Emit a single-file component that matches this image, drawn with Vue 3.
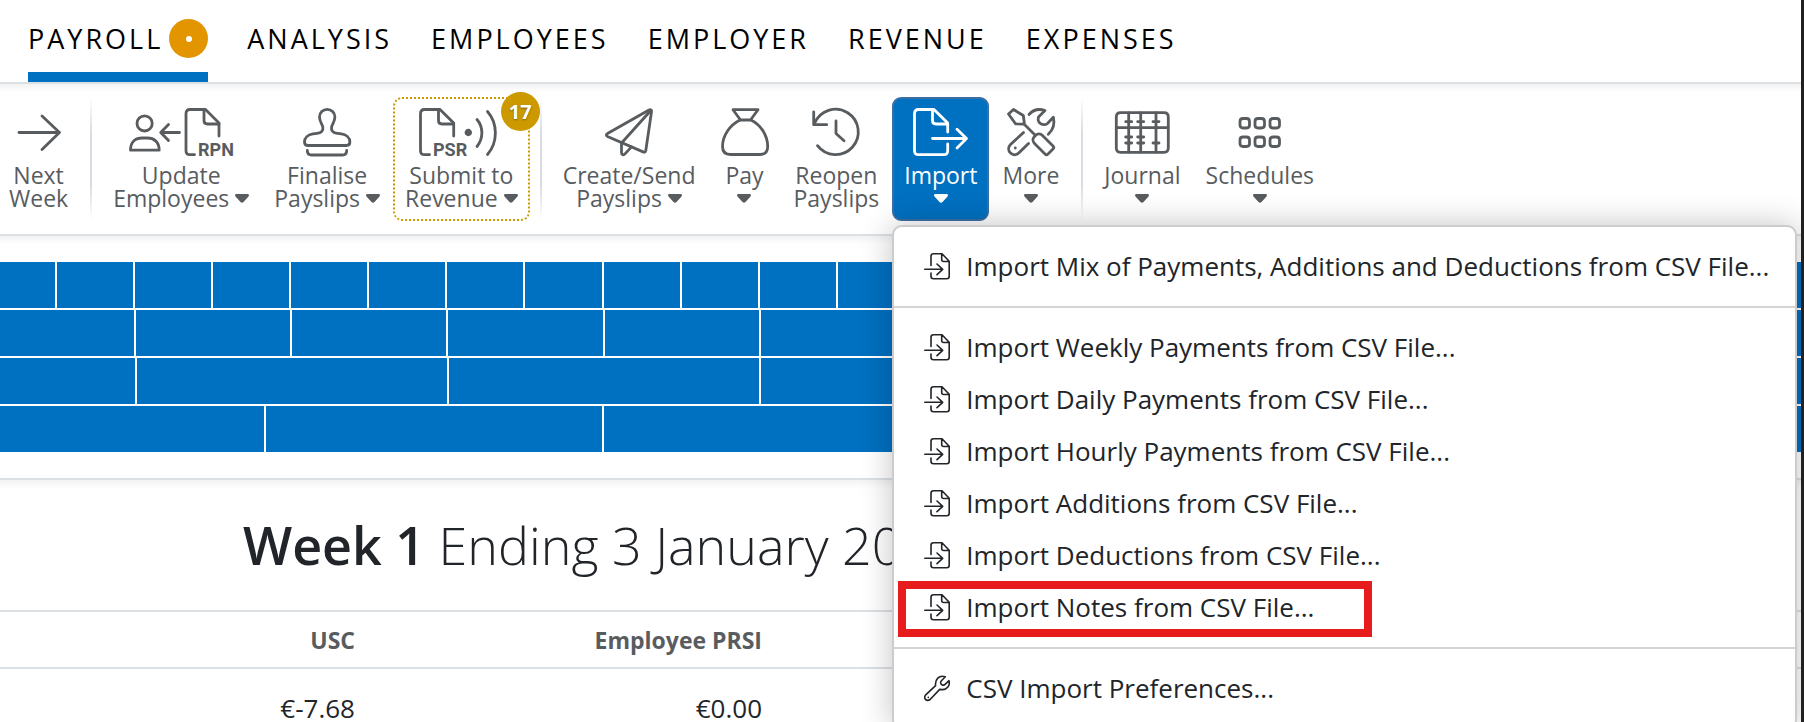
<template>
  <div class="app">
    <nav class="main-nav">
      <a
        v-for="tab in tabs"
        :key="tab"
        href="#"
        class="nav-link"
        :class="{ active: tab === activeTab }"
        @click.prevent="activeTab = tab"
      >
        {{ tab }}
        <span v-if="tab === 'Payroll'" class="nav-badge"><span class="nav-dot"></span></span>
      </a>
    </nav>

    <header class="toolbar">
      <div class="tool-list">
        <template v-for="tool in tools" :key="tool.id">
          <span v-if="tool.id.startsWith('sep')" class="separator"></span>
          <div v-else class="tool">
            <button
              type="button"
              class="tool-btn"
              :class="{ open: tool.id === openMenu, pending: tool.badge }"
              @click="toggle(tool.id)"
            >
              <svg
                class="tool-icon"
                :width="tool.width"
                height="48"
                :viewBox="`0 0 ${tool.width} 48`"
                aria-hidden="true"
              >
                <path v-for="d in tool.paths" :key="d" :d="d" />
                <text v-if="tool.tag" :x="tool.tagX" y="48">{{ tool.tag }}</text>
              </svg>
              <span class="tool-label">
                <span v-for="(line, i) in tool.lines" :key="i" class="label-line">
                  <span v-if="line">{{ line }}</span>
                  <svg v-if="tool.caret && i === 1" class="caret" width="14" height="9" viewBox="0 0 14 9">
                    <path d="M1.4 0h11.2C14 0 14.4 1.5 13.5 2.4L8.5 8c-.9.9-2.1.9-3 0L.5 2.4C-.4 1.5 0 0 1.4 0z" />
                  </svg>
                </span>
              </span>
              <span v-if="tool.badge" class="tool-badge">{{ tool.badge }}</span>
            </button>

            <div v-if="tool.id === 'import' && openMenu === 'import'" class="menu">
              <ul v-for="(group, g) in menuGroups" :key="g" class="menu-group">
                <li v-for="item in group" :key="item" class="menu-item" :class="{ marked: item === markedItem }">
                  <button type="button" class="menu-btn">
                    <svg class="menu-icon" width="26" height="27" viewBox="0 0 26 27" aria-hidden="true">
                      <path :d="item.startsWith('Import') ? importIcon : wrenchIcon" />
                    </svg>
                    <span>{{ item }}</span>
                  </button>
                </li>
              </ul>
            </div>
          </div>
        </template>
      </div>
    </header>

    <section class="timeline">
      <div v-for="(row, r) in timeline" :key="r" class="timeline-row">
        <span v-for="(size, c) in row" :key="c" class="timeline-cell" :style="{ flexGrow: size }"></span>
      </div>
    </section>

    <main class="period">
      <h1 class="period-title"><strong>Week 1</strong> Ending 3 January 2025</h1>
      <table class="pay-table">
        <thead>
          <tr>
            <th class="col-usc">USC</th>
            <th class="col-prsi">Employee PRSI</th>
            <th></th>
          </tr>
        </thead>
        <tbody>
          <tr>
            <td>€-7.68</td>
            <td>€0.00</td>
            <td></td>
          </tr>
        </tbody>
      </table>
    </main>
  </div>
</template>

<script setup>
import { ref } from 'vue'

const tabs = ['Payroll', 'Analysis', 'Employees', 'Employer', 'Revenue', 'Expenses']
const activeTab = ref('Payroll')
const openMenu = ref('import')
const markedItem = 'Import Notes from CSV File...'

const toggle = (id) => {
  openMenu.value = openMenu.value === id ? '' : id
}

const tools = [
  {
    id: 'next',
    width: 44,
    lines: ['Next', 'Week'],
    paths: ['M2 24.5H42', 'M25 8L42.5 24.5 25 41.5']
  },
  { id: 'sep-1' },
  {
    id: 'update',
    width: 104,
    lines: ['Update', 'Employees'],
    caret: true,
    tag: 'RPN',
    tagX: 69,
    paths: [
      'M8 15.4a7.6 7.6 0 1 0 15.2 0a7.6 7.6 0 1 0-15.2 0z',
      'M1.5 42.2C1.5 33.5 7 30 13 30h5.5c6 0 11.7 3.5 11.7 12.2z',
      'M50.5 24.5H32M39.5 16.5L31.7 24.5l7.8 8',
      'M65.5 46.7H61c-2.7 0-4-1.3-4-4V5.5c0-2.7 1.3-4 4-4h15.5L90 15v13',
      'M75 2v10.5c0 2.5 1 3.5 3.5 3.5H90'
    ]
  },
  {
    id: 'finalise',
    width: 48,
    lines: ['Finalise', 'Payslips'],
    caret: true,
    paths: [
      'M5 37.5c-2.5 0-3.5-1-3.5-3.5 0-4.5 4-7.5 8.5-8.2l4-.5c4.5-.4 6.5-2.8 5.8-6.3C19.2 16 16.5 13.5 16.5 9a7.7 7.7 0 0 1 15.4 0c0 4.5-2.7 7-3.3 10-.7 3.5 1.3 5.9 5.8 6.3l4 .5c4.5.7 8.5 3.7 8.5 8.2 0 2.5-1 3.5-3.5 3.5z',
      'M4.3 42.5c0 3.2 1.2 4.5 4.2 4.5h31c3 0 4.2-1.3 4.2-4.5'
    ]
  },
  {
    id: 'submit',
    width: 84,
    lines: ['Submit to', 'Revenue'],
    caret: true,
    badge: 17,
    tag: 'PSR',
    tagX: 14,
    paths: [
      'M10.5 46.7H5.5c-2.7 0-4-1.3-4-4V5.5c0-2.7 1.3-4 4-4H21L34.7 15v13',
      'M19.5 2v10.5c0 2.5 1 3.5 3.5 3.5h11.7',
      'M47 24.5a2.3 2.3 0 1 0 4.6 0a2.3 2.3 0 1 0-4.6 0z',
      'M48.5 24.5h1.6',
      'M58 11.5c6.5 7.5 6.5 19 0 27',
      'M68.5 3.5c10.5 12 10.5 31 0 43'
    ]
  },
  { id: 'sep-2' },
  {
    id: 'create',
    width: 48,
    lines: ['Create/Send', 'Payslips'],
    caret: true,
    paths: [
      'M2.5 25.5L44 2c1.5-.8 2.8 0 2.5 1.8l-5.7 38.7c-.3 1.5-1.3 2-2.7 1.4L2.5 28.5c-1.5-.7-1.5-2.2 0-3z',
      'M46 2.3L17 34.5',
      'M16.5 35v9.5c0 2.3 2 3 3.5 1.4l6.5-7'
    ]
  },
  {
    id: 'pay',
    width: 48,
    lines: ['Pay', ''],
    caret: true,
    paths: [
      'M12 1.7h25L29.5 12h-10z',
      'M19 12C9 17 1.5 27.5 1.5 38.5c0 5.5 2.5 8 8 8h29.5c5.5 0 7.7-2.5 7.7-8C46.7 27.5 40 17 30 12'
    ]
  },
  {
    id: 'reopen',
    width: 48,
    lines: ['Reopen', 'Payslips'],
    paths: ['M2.5 15.5A22.7 22.7 0 1 1 5.5 37.7', 'M1.7 4v12.7h13', 'M24 13v12.5l8 7.2']
  },
  {
    id: 'import',
    width: 55,
    lines: ['Import', ''],
    caret: true,
    paths: [
      'M34.7 36v6.7c0 2.7-1.3 4-4 4H5.5c-2.7 0-4-1.3-4-4V5.5c0-2.7 1.3-4 4-4H21L34.7 15v9',
      'M19.5 2v10.5c0 2.5 1 3.5 3.5 3.5h11.7',
      'M19.5 30.5H53M44 21.3l9.5 9.2-9.5 9.5'
    ]
  },
  {
    id: 'more',
    width: 48,
    lines: ['More', ''],
    caret: true,
    paths: [
      'M1.5 6l5-4.5 9.8 6 1 7.3-1.3 1.4-7.5-.4z',
      'M17 16l11 11',
      'M27.5 28.5l1-1c2-2 5-2 7 0L46 38c1 1 1 2 0 3l-5 5c-1 1-2 1-3 0L27.5 35.5c-2-2-2-5 0-7z',
      'M22 6.5C26 2 32 .5 38 2.5L31.5 9c-1.2 3.5.5 7.5 5.5 7.7 1.5 0 2.5-.4 3.5-1.2l5.8-6.3c1.5 6 .2 12.3-5 17',
      'M16.5 24.5L3.5 36.5c-2.5 2.5-2.5 6 0 8.5s6 2.2 8.5-.2l9.5-9.3',
      'M8.3 39.8v.2'
    ]
  },
  { id: 'sep-3' },
  {
    id: 'journal',
    width: 55,
    lines: ['Journal', ''],
    caret: true,
    paths: [
      'M5.5 4.7h43.5c3 0 4.3 1.3 4.3 4.3v31c0 3-1.3 4.3-4.3 4.3H5.5c-3 0-4.2-1.3-4.2-4.3V9c0-3 1.2-4.3 4.2-4.3z',
      'M1.5 19.7h51.5M13.7 5v39M25.7 5v39M41 5v39',
      'M10.7 13.7h6M22.7 13.7h6M38 13.7h6M10.7 29h6M22.7 29h6M10.7 35h6M22.7 35h6M38 35h6'
    ]
  },
  {
    id: 'schedules',
    width: 44,
    lines: ['Schedules', ''],
    caret: true,
    // two rows of three rounded squares
    paths: [10.5, 29].flatMap((y) =>
      [2, 17, 32].map((x) => `M${x + 3} ${y}h3.5q3 0 3 3v3.5q0 3-3 3h-3.5q-3 0-3-3v-3.5q0-3 3-3z`)
    )
  }
]

const menuGroups = [
  ['Import Mix of Payments, Additions and Deductions from CSV File...'],
  [
    'Import Weekly Payments from CSV File...',
    'Import Daily Payments from CSV File...',
    'Import Hourly Payments from CSV File...',
    'Import Additions from CSV File...',
    'Import Deductions from CSV File...',
    'Import Notes from CSV File...'
  ],
  ['CSV Import Preferences...']
]

const importIcon =
  'M7 12.5V3.3c0-1.7.8-2.5 2.5-2.5H18l7.2 7.5v15c0 1.7-.8 2.5-2.5 2.5H9.5c-1.7 0-2.5-.8-2.5-2.5V20M17.7 1v5.5c0 1.4.6 2 2 2h5.3M.8 16.3H18.5M13 11l5.7 5.3L13 21.7'
const wrenchIcon =
  'M21.3 1.8L17 6.2c-.6 1.4-.2 2.9.8 3.5 1.2.6 2.6.4 3.3-.3l3.9-3.7c1.3 4.8-2 9.3-7 8.9l-2.3-.2-9.6 10.1c-3.7 2.6-7.1-1.4-4.4-4.6l9.9-9.3C10.8 4.5 15-.4 21.3 1.8zM4.3 22.2v.2'

// relative widths: weeks, fortnights, four weeks, months
const timeline = [
  [562, ...Array(22).fill(781), 266],
  [1355, ...Array(10).fill(1562), 1035],
  [1355, ...Array(5).fill(3124), 1035],
  [2655, ...Array(4).fill(3380), 1835]
]
</script>

<style>
body {
  overflow: hidden;
}
</style>

<style scoped>
.app {
  box-sizing: border-box;
  height: 100vh;
  overflow: hidden;
  background: #ffffff;
  border-right: 3px solid #202020;
  font-family: "Open Sans", "Noto Sans", sans-serif;
  color: #212529;
}

button {
  font-family: inherit;
  cursor: pointer;
}

/* Navigation */
.main-nav {
  display: flex;
  gap: 39px;
  height: 82px;
  padding-left: 28px;
  border-bottom: 2px solid #dbe0e4;
}

.nav-link {
  box-sizing: border-box;
  display: flex;
  align-items: center;
  gap: 6px;
  padding-top: 5px;
  border-bottom: 10px solid transparent;
  font-size: 27px;
  letter-spacing: 3px;
  text-transform: uppercase;
  text-decoration: none;
  color: #000000;
}

.nav-link.active {
  border-bottom-color: #0070c0;
}

.nav-badge {
  display: flex;
  align-items: center;
  justify-content: center;
  width: 39px;
  height: 39px;
  border-radius: 50%;
  background: #e39500;
}

.nav-dot {
  width: 6px;
  height: 6px;
  border-radius: 50%;
  background: #ffffff;
}

/* Toolbar */
.toolbar {
  padding: 13px 0;
  border-bottom: 2px solid #dbe0e4;
  box-shadow: inset 0 10px 10px -8px rgba(0, 0, 0, 0.08);
}

.tool-list {
  display: flex;
  gap: 1px;
  margin-left: -3px;
}

.tool {
  position: relative;
}

.tool-btn {
  position: relative;
  display: flex;
  flex-direction: column;
  align-items: center;
  gap: 8px;
  padding: 9px 10px;
  border: 2px solid transparent;
  border-radius: 9px;
  background: transparent;
  color: #585c5f;
  font-size: 23px;
  line-height: 23px;
}

.tool-btn.pending {
  border: 2px dotted #cc9a00;
}

.tool-btn.open {
  background: #0070c0;
  border-color: #3a6ea5;
  color: #ffffff;
}

.tool-icon {
  overflow: visible;
  fill: none;
  stroke: currentColor;
  stroke-width: 2.8;
  stroke-linecap: round;
  stroke-linejoin: round;
}

.tool-icon text {
  fill: currentColor;
  stroke: none;
  font-family: Roboto, sans-serif;
  font-size: 18px;
  font-weight: 700;
}

.label-line {
  display: flex;
  align-items: center;
  justify-content: center;
  gap: 6px;
  height: 23px;
  white-space: nowrap;
}

.caret {
  fill: currentColor;
}

.tool-badge {
  position: absolute;
  top: -7px;
  right: -12px;
  width: 39px;
  height: 39px;
  border-radius: 50%;
  background: #cc9a00;
  color: #ffffff;
  font-size: 20px;
  font-weight: 700;
  line-height: 39px;
  text-align: center;
  text-shadow: 0 1px 2px rgba(0, 0, 0, 0.4);
}

.separator {
  width: 2px;
  margin: 0 8px 0 9px;
  background: linear-gradient(to bottom, transparent, #d6dce1 30%, #d6dce1 70%, transparent);
}

/* Import menu */
.menu {
  position: absolute;
  top: calc(100% + 4px);
  left: 0;
  z-index: 10;
  border: 2px solid #cccccc;
  border-radius: 10px;
  background: #ffffff;
  box-shadow: 0 0 32px rgba(0, 0, 0, 0.24);
}

.menu-group {
  margin: 0;
  padding: 13px 0 14px;
  list-style: none;
}

.menu-group + .menu-group {
  border-top: 2px solid #d2d4d5;
}

.menu-item {
  position: relative;
}

.menu-btn {
  display: flex;
  align-items: center;
  gap: 16px;
  width: 100%;
  height: 52px;
  padding: 0 26px 0 30px;
  border: none;
  background: transparent;
  color: #212529;
  font-size: 26px;
  line-height: 36px;
  white-space: nowrap;
}

.menu-icon {
  fill: none;
  stroke: currentColor;
  stroke-width: 1.6;
  stroke-linecap: round;
  stroke-linejoin: round;
}

.marked::after {
  content: "";
  position: absolute;
  top: 0;
  bottom: -4px;
  left: 4px;
  box-sizing: border-box;
  width: 474px;
  border: 8px solid #e71c1c;
  pointer-events: none;
}

/* Timeline */
.timeline {
  display: flex;
  flex-direction: column;
  gap: 2px;
  padding: 26px 0;
  border-bottom: 2px solid #dbe0e4;
  box-shadow: inset 0 10px 10px -8px rgba(0, 0, 0, 0.08);
}

.timeline-row {
  display: flex;
  height: 46px;
}

.timeline-cell {
  box-sizing: border-box;
  flex-basis: 0;
  border-right: 2px solid #ffffff;
  background: #0070c0;
}

.timeline-cell:last-child {
  border-right: none;
}

/* Pay period */
.period {
  box-shadow: inset 0 10px 10px -8px rgba(0, 0, 0, 0.08);
}

.period-title {
  margin: 0;
  padding: 29px 0 29px 243px;
  font-size: 52px;
  font-weight: 300;
  line-height: 72px;
  white-space: nowrap;
}

.period-title strong {
  font-weight: 600;
}

.pay-table {
  width: 100%;
  table-layout: fixed;
  border-collapse: collapse;
}

.pay-table th,
.pay-table td {
  padding: 0 12px 0 0;
  text-align: right;
}

.pay-table th {
  height: 55px;
  border-top: 2px solid #dbe0e4;
  border-bottom: 2px solid #dbe0e4;
  color: #585c5f;
  font-size: 23px;
  font-weight: 700;
}

.pay-table td {
  height: 77px;
  font-size: 26px;
}

.col-usc {
  width: 355px;
}

.col-prsi {
  width: 395px;
}
</style>
